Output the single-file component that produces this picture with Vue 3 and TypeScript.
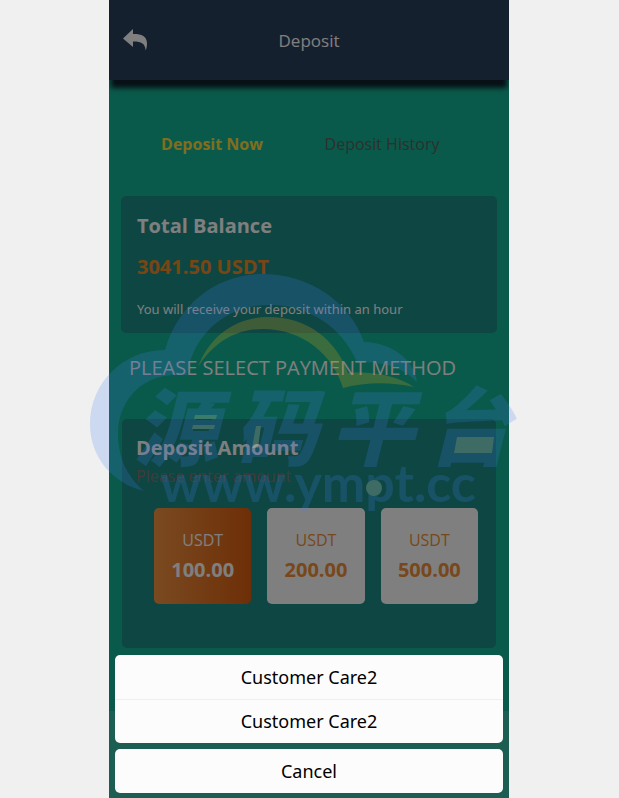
<script setup lang="ts">
import { ref } from 'vue'

const amounts = ['100.00', '200.00', '500.00']
const selected = ref('100.00')
const amount = ref('')
const sheetOpen = ref(true)
const contacts = [
  { id: 1, name: 'Customer Care2' },
  { id: 2, name: 'Customer Care2' },
]
const brand = [
  { char: '源', x: 134 },
  { char: '码', x: 234 },
  { char: '平', x: 330 },
  { char: '台', x: 427 },
]
</script>

<template>
  <div class="page">
    <div class="phone">
      <header class="topbar">
        <button class="back" type="button" aria-label="Back">
          <svg viewBox="0 0 24 22" width="24" height="22">
            <path d="M0 9.500 10 0v5C18 4.800 24 7 24 14.500c0 2.400-.4 4.500-1.300 7C22 14.500 18.500 12.500 10 12.600V18Z" fill="#fff" />
          </svg>
        </button>
        <h1>Deposit</h1>
      </header>

      <main class="content">
        <nav class="tabs">
          <a class="active" href="#now">Deposit Now</a>
          <a href="#history">Deposit History</a>
        </nav>

        <section class="balance">
          <h2>Total Balance</h2>
          <strong>3041.50 USDT</strong>
          <p>You will receive your deposit within an hour</p>
        </section>

        <h3 class="method">PLEASE SELECT PAYMENT METHOD</h3>

        <section class="deposit">
          <label for="amount">Deposit Amount</label>
          <input id="amount" v-model="amount" type="text" placeholder="Please enter amount" />
          <div class="options">
            <button
              v-for="value in amounts"
              :key="value"
              type="button"
              :class="{ chosen: value === selected }"
              @click="selected = value"
            >
              <span>USDT</span>
              <b>{{ value }}</b>
            </button>
          </div>
        </section>
      </main>

      <div v-if="sheetOpen" class="mask" @click="sheetOpen = false"></div>
      <div v-if="sheetOpen" class="sheet">
        <div class="group">
          <button v-for="contact in contacts" :key="contact.id" type="button">{{ contact.name }}</button>
        </div>
        <div class="group">
          <button type="button" @click="sheetOpen = false">Cancel</button>
        </div>
      </div>
    </div>

    <svg class="watermark" viewBox="80 260 450 270" width="450" height="270">
      <g opacity="0.2">
        <path
          fill="#4182f0"
          d="M165 350C178 304 217 274 262 274C310 274 350 302 364 342C392 343 414 359 417 382C403 367 382 361 357 362C341 325 307 305 270 305C225 305 193 335 187 375H172C140 377 118 402 118 434C118 459 128 477 144 491C112 483 90 457 90 424C90 383 123 350 165 350Z"
        />
        <path
          fill="#ffb40f"
          d="M198 367C209 337 235 317 268 317C308 317 336 340 348 373C374 371 397 376 414 387C390 382 366 382 343 388C333 354 302 329 263 329C233 329 212 345 198 367Z"
        />
        <g class="brand" fill="#4182f0">
          <text v-for="item in brand" :key="item.char" :x="item.x" y="459">{{ item.char }}</text>
        </g>
        <text class="site" x="160" y="502" fill="#4182f0">www.ympt.cc</text>
        <g fill="#ffffe6">
          <path d="M195 415h22l-1 4h-22ZM193 425h22l-1 4h-22ZM256 426h5l-3 22h-6ZM457 437h37l-2 16h-38Z" />
          <circle cx="374" cy="488" r="8" />
        </g>
      </g>
    </svg>
  </div>
</template>

<style>
body {
  margin: 0;
  background: #f0f0f0;
}
</style>

<style scoped>
* {
  box-sizing: border-box;
}

.page {
  position: relative;
  min-height: 100vh;
  display: flex;
  justify-content: center;
  padding-right: 1px;
  font-family: 'Open Sans', 'Noto Sans', sans-serif;
  color: #fff;
}

button,
input {
  font: inherit;
  border: 0;
  padding: 0;
  margin: 0;
}

h1,
h2,
h3,
p {
  margin: 0;
}

.phone {
  position: relative;
  width: 100%;
  max-width: 400px;
  overflow: hidden;
  background: #38bca4;
}

.topbar {
  position: relative;
  height: 80px;
  padding: 2px 14px 0;
  display: grid;
  grid-template-columns: 24px 1fr 24px;
  align-items: center;
  background: #2a405c;
  box-shadow: 0 10px 5px -2px #10202c;
}

.topbar h1 {
  font-size: 17px;
  font-weight: 400;
  line-height: 24px;
  text-align: center;
}

.back {
  display: flex;
  padding-bottom: 2px;
  background: none;
}

.content {
  padding: 36px 12px 63px;
  background: #14b496;
}

.tabs {
  display: grid;
  grid-template-columns: 170px 170px;
  margin: 0 6px 32px;
}

.tabs a {
  font-size: 16px;
  line-height: 56px;
  height: 48px;
  text-align: center;
  text-decoration: none;
  color: #5c605c;
}

.tabs .active {
  font-weight: 700;
  color: #ffdc3c;
}

.balance {
  display: flex;
  flex-direction: column;
  height: 137px;
  padding: 14px 16px;
  border-radius: 5px;
  background: #1c8c86;
}

.balance h2,
.balance strong {
  font-size: 20px;
  font-weight: 700;
  line-height: 32px;
}

.balance h2 {
  margin-bottom: 9px;
}

.balance strong {
  color: #f08c28;
  margin-bottom: 16px;
}

.balance p {
  font-family: 'Noto Sans', sans-serif;
  font-size: 13px;
  line-height: 20px;
}

.method {
  padding-left: 8px;
  margin: 19px 0;
  font-size: 20px;
  font-weight: 400;
  line-height: 32px;
  height: 48px;
  white-space: nowrap;
}

.deposit {
  margin: 0 1px;
  padding: 14px 18px 44px 14px;
  border-radius: 5px;
  background: #1c8c86;
}

.deposit label {
  display: block;
  font-size: 20px;
  font-weight: 700;
  line-height: 30px;
}

.deposit input {
  display: block;
  width: 100%;
  height: 26px;
  font-size: 16px;
  background: none;
  color: #fff;
}

.deposit input::placeholder {
  color: #8a7474;
  opacity: 1;
}

.options {
  display: grid;
  grid-template-columns: repeat(3, 1fr);
  gap: 16px;
  margin: 19px 0 0 18px;
}

.options button {
  display: flex;
  flex-direction: column;
  align-items: center;
  height: 96px;
  padding-top: 16px;
  border-radius: 5px;
  background: #fff;
  color: #f09038;
}

.options .chosen {
  background: linear-gradient(90deg, #f49440, #dc5e10);
  color: #fff;
}

.options span {
  font-size: 16px;
  line-height: 32px;
}

.options b {
  font-size: 20px;
  line-height: 28px;
}

.mask {
  position: absolute;
  inset: 0;
  background: rgba(0, 0, 0, 0.5);
}

.sheet {
  position: absolute;
  left: 6px;
  right: 6px;
  bottom: 5px;
  display: flex;
  flex-direction: column;
  gap: 6px;
}

.group {
  border-radius: 5px;
  overflow: hidden;
  background: #fcfcfc;
}

.group button {
  display: block;
  width: 100%;
  height: 44px;
  background: none;
  font-family: 'Noto Sans', sans-serif;
  font-size: 18px;
  color: #000;
}

.group button + button {
  box-shadow: inset 0 1px #efefef;
}

.watermark {
  position: absolute;
  top: 260px;
  left: 80px;
  pointer-events: none;
}

.brand {
  font-family: 'Noto Sans CJK SC', sans-serif;
  font-size: 84px;
  font-weight: 900;
  font-style: italic;
}

.site {
  font-family: Lato, sans-serif;
  font-size: 52px;
  font-weight: 700;
}
</style>
